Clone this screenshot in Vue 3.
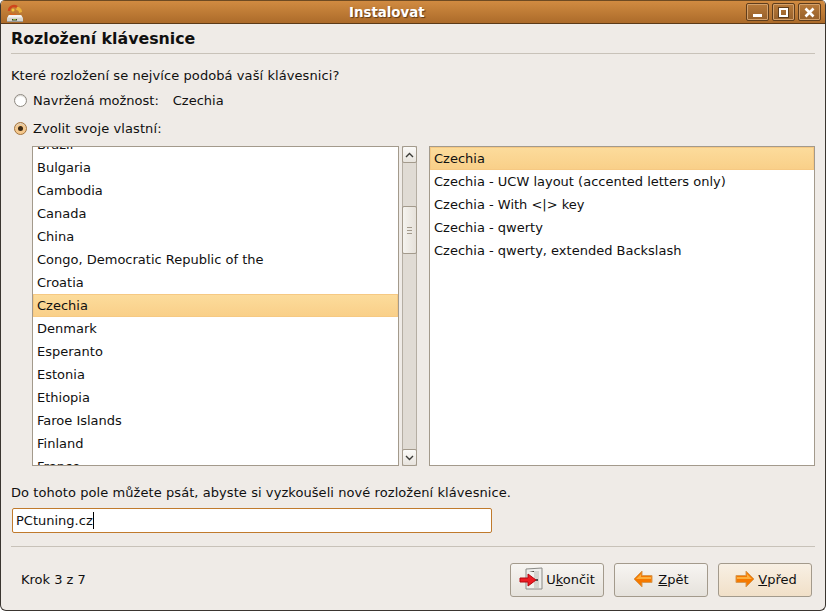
<template>
  <div class="window">
    <div class="titlebar">
      <svg class="app-icon" width="18" height="20" viewBox="0 0 18 20">
        <path d="M3 7a5 5 0 0 1 8-4" fill="none" stroke="#d0451c" stroke-width="2.400" />
        <path d="M11 3c3 0 5 2 5 5l-3 1c0-2-1-3-3-3z" fill="#e9b13c" />
        <path d="M4 9a4 4 0 0 0 6 1" fill="none" stroke="#d9661f" stroke-width="2" />
        <circle cx="7" cy="6" r="1.500" fill="#f3c63e" />
        <path d="M3 11h12l2 3v4H1v-4z" fill="#d6d4ce" />
        <path d="M3 11h12l1.500 2.500h-15z" fill="#f4f3f0" />
        <path d="M1 17h16v1H1z" fill="#9c9a94" />
        <path d="M6 15h5v1.500H6z" fill="#2f3a24" />
        <path d="M7 15h3v1H7z" fill="#7fae3c" />
      </svg>
      <span class="title">Instalovat</span>
      <div class="win-btns">
        <button class="win-btn"><span class="min"></span></button>
        <button class="win-btn"><span class="max"></span></button>
        <button class="win-btn">
          <svg width="11" height="11" viewBox="0 0 11 11">
            <path d="M1.500 1.500l8 8M9.500 1.500l-8 8" stroke="#fff" stroke-width="2.600" />
          </svg>
        </button>
      </div>
    </div>

    <div class="content">
      <h1>Rozložení klávesnice</h1>
      <div class="rule"></div>
      <p class="question">Které rozložení se nejvíce podobá vaší klávesnici?</p>

      <div class="radio-row first">
        <span class="radio"></span>
        <span>Navržená možnost:</span>
        <span class="suggested">Czechia</span>
      </div>
      <div class="radio-row second">
        <span class="radio on"></span>
        <span>Zvolit svoje vlastní:</span>
      </div>

      <div class="lists">
        <div class="list countries">
          <div class="list-inner">
            <div
              v-for="c in countries"
              :key="c"
              class="item"
              :class="{ selected: c === 'Czechia' }"
            >{{ c }}</div>
          </div>
        </div>
        <div class="scrollbar">
          <div class="arrow">
            <svg width="9" height="6" viewBox="0 0 9 6"><path d="M1 5l3.500-3.500L8 5" fill="none" stroke="#3c3c38" stroke-width="1.400" /></svg>
          </div>
          <div class="track">
            <div class="thumb"><span></span><span></span><span></span></div>
          </div>
          <div class="arrow">
            <svg width="9" height="6" viewBox="0 0 9 6"><path d="M1 1l3.500 3.500L8 1" fill="none" stroke="#3c3c38" stroke-width="1.400" /></svg>
          </div>
        </div>
        <div class="list variants">
          <div
            v-for="v in variants"
            :key="v"
            class="item"
            :class="{ selected: v === 'Czechia' }"
          >{{ v }}</div>
        </div>
      </div>

      <p class="try-label">Do tohoto pole můžete psát, abyste si vyzkoušeli nové rozložení klávesnice.</p>
      <div class="entry">PCtuning.cz<span class="caret"></span></div>
      <div class="rule bottom"></div>

      <div class="footer">
        <span class="step">Krok 3 z 7</span>
        <div class="buttons">
          <button class="btn quit">
            <svg width="25" height="26" viewBox="0 0 25 26">
              <path d="M7 3l16-1v21H7z" fill="#eeeeec" stroke="#8a8a86" />
              <path d="M10 5h10v17H10z" fill="#3a342e" />
              <path d="M15 5h5v17h-5z" fill="#d4d4cf" />
              <path d="M10 5l5 1v16h-5z" fill="#f2f2ef" />
              <circle cx="18" cy="14" r="1" fill="#222" />
              <path d="M1 12h8V8l8 6-8 6v-4H1z" fill="#ee1c24" stroke="#b3070e" />
            </svg>
            <span>U<u>k</u>ončit</span>
          </button>
          <button class="btn back">
            <svg width="20" height="18" viewBox="0 0 20 18">
              <path d="M1 9l8-8v4.500h10v7H9V17z" fill="#f57900" stroke="#d69a55" />
              <path d="M3 9l5-5v3h10v2z" fill="#fcaf3e" />
            </svg>
            <span><u>Z</u>pět</span>
          </button>
          <button class="btn next">
            <svg width="20" height="18" viewBox="0 0 20 18">
              <path d="M19 9l-8-8v4.500H1v7h10V17z" fill="#f57900" stroke="#d69a55" />
              <path d="M2 7h10V4l5 5H2z" fill="#fcaf3e" />
            </svg>
            <span><u>V</u>před</span>
          </button>
        </div>
      </div>
    </div>
  </div>
</template>

<script setup>
const countries = [
  'Brazil',
  'Bulgaria',
  'Cambodia',
  'Canada',
  'China',
  'Congo, Democratic Republic of the',
  'Croatia',
  'Czechia',
  'Denmark',
  'Esperanto',
  'Estonia',
  'Ethiopia',
  'Faroe Islands',
  'Finland',
  'France'
]

const variants = [
  'Czechia',
  'Czechia - UCW layout (accented letters only)',
  'Czechia - With <|> key',
  'Czechia - qwerty',
  'Czechia - qwerty, extended Backslash'
]
</script>

<style>
html, body {
  margin: 0;
  background: #fff;
}
</style>

<style scoped>
.window {
  width: 826px;
  height: 611px;
  box-sizing: border-box;
  background: #efebe7;
  border-left: 1px solid #3a3530;
  border-right: 1px solid #3a3530;
  border-bottom: 1px solid #3a3530;
  border-radius: 5px 5px 6px 6px;
  overflow: hidden;
  font-family: "DejaVu Sans", sans-serif;
  font-size: 13px;
  color: #101010;
  display: flex;
  flex-direction: column;
}

.titlebar {
  height: 24px;
  flex: none;
  box-sizing: border-box;
  position: relative;
  display: flex;
  align-items: center;
  padding-left: 348px;
  background: linear-gradient(#d18b41, #ac6b2a);
  border-top: 1px solid #6e4a22;
  border-bottom: 1px solid #5c3a18;
}

.app-icon {
  position: absolute;
  left: 5px;
  top: 3px;
}

.title {
  color: #fff;
  font-weight: bold;
  font-size: 13.33px;
  text-shadow: 1px 1px 1px #5c3a18;
}

.win-btns {
  position: absolute;
  right: 4px;
  top: 2px;
  display: flex;
  gap: 3px;
}

.win-btn {
  width: 23px;
  height: 18px;
  padding: 0;
  box-sizing: border-box;
  display: flex;
  align-items: center;
  justify-content: center;
  background: linear-gradient(#b87a3a, #96602a);
  border: 1px solid #5f3d1c;
  box-shadow: inset 0 0 0 1px #d3a06a;
  border-radius: 2px;
}

.min {
  width: 9px;
  height: 3px;
  margin-top: 6px;
  background: #fff;
}

.max {
  width: 5px;
  height: 5px;
  border: 2px solid #fff;
  outline: 1px solid #5f3d1c;
}

.content {
  flex: 1;
  min-height: 0;
  padding: 6px 10px 0 10px;
  display: flex;
  flex-direction: column;
}

h1 {
  margin: 0;
  height: 23px;
  line-height: 18px;
  font-size: 15.8px;
  font-weight: bold;
  color: #101010;
}

.rule {
  height: 1px;
  flex: none;
  background: #c8c2b9;
}

.question {
  margin: 13px 0 0;
  line-height: 17px;
  letter-spacing: 0.08px;
}

.radio-row {
  display: flex;
  align-items: center;
  line-height: 17px;
  padding-left: 3px;
}

.radio-row.first {
  margin-top: 8px;
}

.radio-row.second {
  margin-top: 11px;
  letter-spacing: 0.1px;
}

.radio {
  width: 11px;
  height: 11px;
  margin-right: 6px;
  border: 1px solid #8f8a82;
  border-radius: 50%;
  background: #fff;
  position: relative;
  box-shadow: inset 0 1px 1px #d8d4ce;
}

.radio.on {
  background: #f5c88c;
  border-color: #a5743c;
}

.radio.on::after {
  content: "";
  position: absolute;
  left: 3px;
  top: 3px;
  width: 5px;
  height: 5px;
  border-radius: 50%;
  background: #3c2a14;
}

.suggested {
  margin-left: 14px;
}

.lists {
  display: flex;
  margin: 9px 0 0 21px;
  height: 320px;
  flex: none;
}

.list {
  box-sizing: border-box;
  background: #fff;
  border: 1px solid #a39a8c;
  overflow: hidden;
}

.countries {
  width: 367px;
}

.list-inner {
  margin-top: -14px;
}

.variants {
  width: 386px;
  margin-left: 12px;
}

.item {
  height: 23px;
  line-height: 23px;
  padding-left: 4px;
  white-space: nowrap;
  color: #101010;
}

.item.selected {
  background: linear-gradient(#fcdc9c, #f9cf88);
  box-shadow: inset 0 0 0 1px #f6c983;
}

.scrollbar {
  width: 15px;
  margin-left: 3px;
  display: flex;
  flex-direction: column;
  background: #e0dbd4;
  border-left: 1px solid #b5aea3;
  border-right: 1px solid #b5aea3;
  box-sizing: border-box;
}

.arrow {
  height: 15px;
  flex: none;
  margin: 0 -1px;
  display: flex;
  align-items: center;
  justify-content: center;
  background: linear-gradient(#fbfaf8, #e8e4de);
  border: 1px solid #a39a8c;
  border-radius: 2px;
}

.track {
  flex: 1;
  padding-top: 43px;
}

.thumb {
  height: 48px;
  box-sizing: border-box;
  margin: 0 -1px;
  display: flex;
  flex-direction: column;
  align-items: center;
  justify-content: center;
  gap: 2px;
  background: linear-gradient(90deg, #f5f3ef, #e6e1da);
  border: 1px solid #a39a8c;
  border-radius: 2px;
}

.thumb span {
  width: 5px;
  height: 1px;
  background: #a39a8c;
}

.try-label {
  margin: 18px 0 0;
  line-height: 17px;
  letter-spacing: 0.07px;
}

.entry {
  margin: 7px 0 0 1px;
  width: 480px;
  height: 25px;
  flex: none;
  box-sizing: border-box;
  display: flex;
  align-items: center;
  padding-left: 3px;
  background: #fff;
  border: 1px solid #c07a2c;
  border-radius: 2px;
}

.caret {
  width: 1px;
  height: 17px;
  background: #000;
}

.rule.bottom {
  margin-top: 13px;
}

.footer {
  display: flex;
  align-items: center;
  justify-content: space-between;
  margin-top: 16px;
  padding-left: 10px;
}

.step {
  margin-bottom: 2px;
}

.buttons {
  display: flex;
  gap: 10px;
  padding-right: 3px;
}

.btn {
  width: 94px;
  height: 34px;
  padding: 0 0 2px;
  box-sizing: border-box;
  display: flex;
  align-items: center;
  justify-content: center;
  gap: 2px;
  font: inherit;
  color: #101010;
  background: linear-gradient(#f7f5f2, #e6e2dc);
  border: 1px solid #a39a8c;
  border-radius: 3px;
}

.btn.back {
  gap: 5px;
}

.btn.next {
  gap: 3px;
  padding-left: 2px;
  background: linear-gradient(#f8f0e4, #f1e0c8);
}
</style>
